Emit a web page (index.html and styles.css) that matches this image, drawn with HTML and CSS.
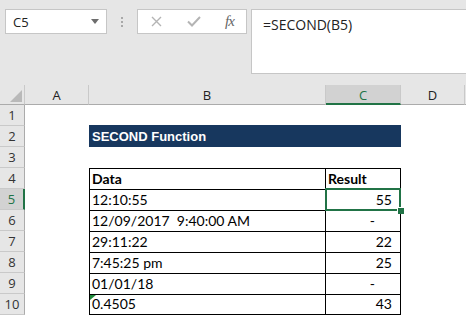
FILE: index.html
```html
<!DOCTYPE html>
<html>
<head>
<meta charset="utf-8">
<link rel="stylesheet" href="styles.css">
</head>
<body>
<div class="app">
  <div class="bar">
    <div class="namebox">
      <span class="nb-text">C5</span>
      <svg class="caret" width="8" height="5" viewBox="0 0 8 5"><path d="M0 0 H8 L4 5 Z" fill="#6d6d6d"/></svg>
    </div>
    <div class="grip"><i></i><i></i><i></i></div>
    <div class="fxbox">
      <svg class="ico-x" width="11" height="11" viewBox="0 0 11 11"><path d="M1 1 L10 10 M10 1 L1 10" stroke="#b4b4b4" stroke-width="1.4" fill="none"/></svg>
      <svg class="ico-ok" width="14" height="11" viewBox="0 0 14 11"><path d="M1 5.5 L5 9.5 L13 1" stroke="#b4b4b4" stroke-width="2" fill="none"/></svg>
      <span class="fx">fx</span>
    </div>
    <div class="formula">=SECOND(B5)</div>
  </div>
  <div class="sheet">
    <div class="corner"><svg width="12" height="12" viewBox="0 0 12 12"><path d="M12 0 V12 H0 Z" fill="#b9b9b9"/></svg></div>
    <div class="ch">A</div>
    <div class="ch">B</div>
    <div class="ch sel">C</div>
    <div class="ch">D</div>
    <div class="ch last"></div>

    <div class="rh">1</div><div class="c"></div><div class="c"></div><div class="c"></div><div class="c"></div><div class="c"></div>

    <div class="rh">2</div><div class="c"></div><div class="c title">SECOND Function</div><div class="c title"></div><div class="c"></div><div class="c"></div>

    <div class="rh">3</div><div class="c"></div><div class="c"></div><div class="c"></div><div class="c"></div><div class="c"></div>

    <div class="rh">4</div><div class="c"></div><div class="c tb tl b">Data</div><div class="c tc b">Result</div><div class="c"></div><div class="c"></div>

    <div class="rh sel">5</div><div class="c"></div><div class="c tb tl">12:10:55</div><div class="c tc num active">55<span class="selbox"><span class="handle"></span></span></div><div class="c"></div><div class="c"></div>

    <div class="rh">6</div><div class="c"></div><div class="c tb tl">12/09/2017  9:40:00 AM</div><div class="c tc num dash">-</div><div class="c"></div><div class="c"></div>

    <div class="rh">7</div><div class="c"></div><div class="c tb tl">29:11:22</div><div class="c tc num">22</div><div class="c"></div><div class="c"></div>

    <div class="rh">8</div><div class="c"></div><div class="c tb tl">7:45:25 pm</div><div class="c tc num">25</div><div class="c"></div><div class="c"></div>

    <div class="rh">9</div><div class="c"></div><div class="c tb tl">01/01/18</div><div class="c tc num dash">-</div><div class="c"></div><div class="c"></div>

    <div class="rh">10</div><div class="c"></div><div class="c tb tl bot err">0.4505</div><div class="c tc num bot">43</div><div class="c"></div><div class="c"></div>
  </div>
</div>
</body>
</html>
```
FILE: styles.css
```css
html, body {
  margin: 0;
  padding: 0;
}
body {
  width: 466px;
  height: 316px;
  overflow: hidden;
  background: #ffffff;
}
.app {
  width: 466px;
  height: 316px;
  overflow: hidden;
}
.bar {
  height: 85px;
  background: #e6e6e6;
  display: flex;
  align-items: flex-start;
  padding: 9px 0 0 5px;
  box-sizing: border-box;
}
.namebox {
  width: 102px;
  height: 25px;
  box-sizing: border-box;
  background: #fff;
  border: 1px solid #c6c6c6;
  display: flex;
  align-items: center;
  justify-content: space-between;
  padding: 0 7px 0 7px;
}
.nb-text {
  font-family: "Open Sans", sans-serif;
  font-size: 13px;
  color: #222;
}
.caret {
  display: block;
}
.grip {
  width: 30px;
  height: 25px;
  display: flex;
  flex-direction: column;
  align-items: center;
  justify-content: center;
  gap: 2px;
}
.grip i {
  display: block;
  width: 2px;
  height: 2px;
  background: #a8a8a8;
}
.fxbox {
  width: 110px;
  height: 25px;
  box-sizing: border-box;
  background: #fff;
  border: 1px solid #c6c6c6;
  display: flex;
  align-items: center;
  padding-left: 13px;
}
.ico-x {
  display: block;
}
.ico-ok {
  display: block;
  margin-left: 25px;
}
.fx {
  margin-left: 24px;
  font-family: "Liberation Serif", serif;
  font-style: italic;
  font-size: 15px;
  color: #666;
  letter-spacing: -1px;
}
.formula {
  margin-left: 4px;
  flex: 1;
  height: 65px;
  box-sizing: border-box;
  background: #fff;
  border: 1px solid #c6c6c6;
  border-right: none;
  padding: 5px 0 0 11px;
  font-family: "Open Sans", sans-serif;
  font-size: 14px;
  color: #222;
}
.sheet {
  display: grid;
  grid-template-columns: 25px 64px 237px 75px 64px 1fr;
  grid-template-rows: 20px;
  grid-auto-rows: 21px;
}
.corner {
  background: #e6e6e6;
  border-bottom: 1px solid #ababab;
  border-right: 1px solid #c9c9c9;
  box-sizing: border-box;
  display: flex;
  align-items: flex-end;
  justify-content: flex-end;
  padding: 0 2px 2px 0;
}
.corner svg {
  display: block;
}
.ch {
  background: #e6e6e6;
  border-bottom: 1px solid #ababab;
  border-right: 1px solid #c9c9c9;
  box-sizing: border-box;
  display: flex;
  align-items: center;
  justify-content: center;
  font-family: "Open Sans", sans-serif;
  font-size: 13px;
  color: #222;
  padding-top: 1px;
}
.ch.sel {
  background: #d2d2d2;
  border-bottom: 2px solid #217346;
  color: #217346;
}
.ch.last {
  border-right: none;
}
.rh {
  background: #e6e6e6;
  border-bottom: 1px solid #c9c9c9;
  border-right: 1px solid #ababab;
  box-sizing: border-box;
  display: flex;
  align-items: center;
  justify-content: center;
  font-family: "Open Sans", sans-serif;
  font-size: 13px;
  color: #333;
}
.rh.sel {
  background: #d2d2d2;
  border-right: 2px solid #217346;
  color: #217346;
}
.c {
  box-sizing: border-box;
  font-family: Lato, "Liberation Sans", sans-serif;
  font-size: 14px;
  color: #000;
  white-space: pre;
  display: flex;
  align-items: flex-end;
  padding: 0 0 1px 2px;
  line-height: 18px;
}
.title {
  background: #17375e;
  color: #fff;
  font-family: "Liberation Sans", Arial, sans-serif;
  font-weight: bold;
  font-size: 13px;
  align-items: center;
  padding: 1px 0 0 3px;
  margin-top: -1px;
}
.tb {
  border-top: 1px solid #000;
}
.tl {
  border-left: 1px solid #000;
  border-right: 1px solid #000;
}
.tc {
  border-top: 1px solid #000;
  border-right: 1px solid #000;
}
.bot {
  border-bottom: 1px solid #000;
}
.b {
  font-weight: bold;
}
.num {
  justify-content: flex-end;
  padding-right: 8px;
}
.dash {
  padding-right: 25px;
}
.active {
  position: relative;
}
.selbox {
  position: absolute;
  left: -1px;
  top: -2px;
  right: -1px;
  bottom: -1px;
  border: 2px solid #217346;
}
.handle {
  position: absolute;
  right: -5px;
  bottom: -5px;
  width: 6px;
  height: 6px;
  background: #217346;
  border: 1px solid #fff;
  border-right: none;
  border-bottom: none;
}
.err {
  position: relative;
}
.err::before {
  content: "";
  position: absolute;
  left: 0;
  top: 0;
  border-top: 5px solid #1e8a3a;
  border-right: 6px solid transparent;
}
```
